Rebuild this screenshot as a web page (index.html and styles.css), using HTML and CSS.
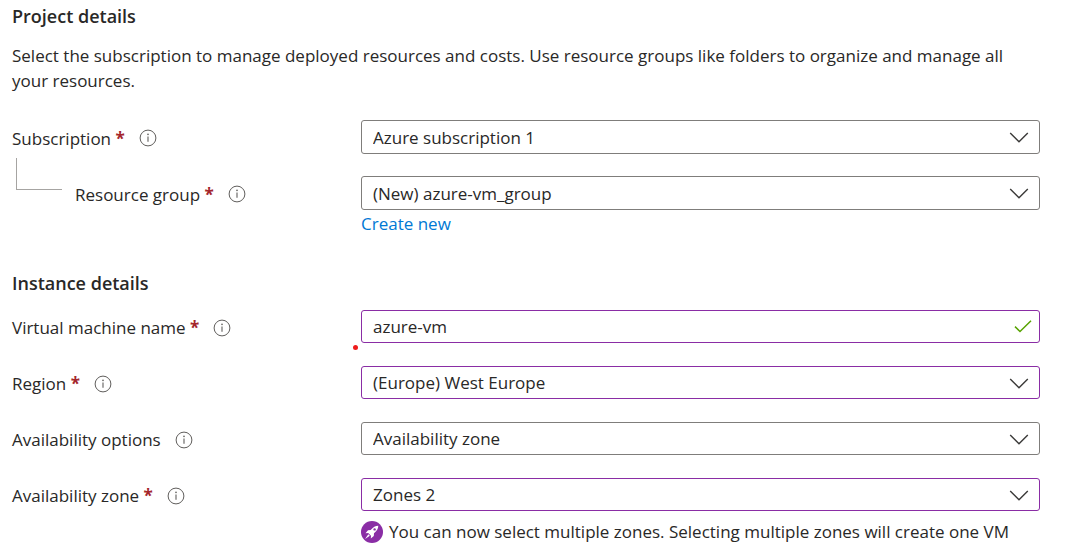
FILE: index.html
```html
<!DOCTYPE html>
<html lang="en">
<head>
<meta charset="utf-8">
<meta name="viewport" content="width=device-width, initial-scale=1">
<title>Create a virtual machine</title>
<link rel="stylesheet" href="styles.css">
</head>
<body>
<svg class="symbols" aria-hidden="true">
  <symbol id="info" viewBox="0 0 18 18"><circle cx="9" cy="9" r="7.9" fill="none" stroke="currentColor" stroke-width="1"/><path d="M9 7.400v5.400" stroke="currentColor" stroke-width="1.1"/><circle cx="9" cy="5.400" r=".8" fill="currentColor"/></symbol>
  <symbol id="chevron" viewBox="0 0 20 12"><path d="M1.200 1.900 10 10.700l8.800-8.800" fill="none" stroke="currentColor" stroke-width="1.400"/></symbol>
</svg>
<main class="form">
  <section class="section">
    <h2 class="heading">Project details</h2>
    <p class="intro">Select the subscription to manage deployed resources and costs. Use resource groups like folders to organize and manage all your resources.</p>
    <div class="fields">
      <div class="row">
        <div class="caption"><label for="subscription">Subscription <span class="required">*</span></label><svg class="info"><use href="#info"/></svg></div>
        <div class="picker"><select id="subscription" class="control"><option>Azure subscription 1</option></select><svg class="chevron"><use href="#chevron"/></svg></div>
      </div>
      <div class="row">
        <div class="caption"><span class="branch"></span><label for="group">Resource group <span class="required">*</span></label><svg class="info"><use href="#info"/></svg></div>
        <div>
          <div class="picker"><select id="group" class="control"><option>(New) azure-vm_group</option></select><svg class="chevron"><use href="#chevron"/></svg></div>
          <a class="link" href="#">Create new</a>
        </div>
      </div>
    </div>
  </section>
  <section class="section">
    <h2 class="heading">Instance details</h2>
    <div class="fields compact">
      <div class="row">
        <div class="caption"><label for="vm-name">Virtual machine name <span class="required">*</span></label><svg class="info"><use href="#info"/></svg></div>
        <div class="picker"><input id="vm-name" class="control edited" type="text" value="azure-vm"><svg class="check" viewBox="0 0 18 14"><path d="M1 6.600 6 11.500 17 .7" fill="none" stroke="currentColor" stroke-width="1.500"/></svg><span class="marker"></span></div>
      </div>
      <div class="row">
        <div class="caption"><label for="region">Region <span class="required">*</span></label><svg class="info"><use href="#info"/></svg></div>
        <div class="picker"><select id="region" class="control edited"><option>(Europe) West Europe</option></select><svg class="chevron"><use href="#chevron"/></svg></div>
      </div>
      <div class="row">
        <div class="caption"><label for="options">Availability options</label><svg class="info"><use href="#info"/></svg></div>
        <div class="picker"><select id="options" class="control"><option>Availability zone</option></select><svg class="chevron"><use href="#chevron"/></svg></div>
      </div>
      <div class="row">
        <div class="caption"><label for="zone">Availability zone <span class="required">*</span></label><svg class="info"><use href="#info"/></svg></div>
        <div>
          <div class="picker"><select id="zone" class="control edited"><option>Zones 2</option></select><svg class="chevron"><use href="#chevron"/></svg></div>
          <p class="hint"><svg class="rocket" viewBox="0 0 22 22"><circle cx="11" cy="11" r="11" fill="#8a2da5"/><path d="M17.300 4.700c-2.900 0-5.300 1.500-7.600 4.300L7 9.200l-2.500 3 2.700-.2 2.800 2.800-.2 2.700 3-2.500.2-2.700c2.800-2.300 4.300-4.700 4.300-7.600z" fill="#fff"/><circle cx="13.600" cy="8.400" r="1.200" fill="#8a2da5"/><path d="m7.300 13.200-3.200 4.700 4.700-3.200z" fill="#fff"/></svg><span>You can now select multiple zones. Selecting multiple zones will create one VM</span></p>
        </div>
      </div>
    </div>
  </section>
</main>
</body>
</html>
```
FILE: styles.css
```css
* { box-sizing: border-box; }

body {
  margin: 0;
  background: #fff;
  color: #292827;
  font: 17px/25px "Open Sans", "Noto Sans", sans-serif;
}

.symbols { position: absolute; width: 0; height: 0; }

.form {
  display: flex;
  flex-direction: column;
  gap: 35px;
  padding: 4px 32px 0 12px;
}

.heading { margin: 0; font-size: 18px; line-height: 25px; font-weight: 600; }
.intro { margin: 14px 0 13px; }

.fields { display: grid; gap: 22px; padding-top: 14px; }
.row { display: grid; grid-template-columns: 349px minmax(0, 1fr); align-items: start; }
.caption { display: flex; align-items: center; height: 36px; margin-bottom: -2px; white-space: nowrap; }
.required { color: #a4262c; font-weight: 700; }
.info { width: 18px; height: 18px; margin-left: 14px; color: #605e5c; }

.branch {
  align-self: flex-start;
  width: 46px;
  height: 32px;
  margin: -18px 13px 0 4px;
  border: solid #a6a4a2;
  border-width: 0 0 1px 1px;
}

.picker { position: relative; display: grid; align-items: center; }
.control {
  width: 100%;
  height: 34px;
  padding: 0 44px 0 11px;
  appearance: none;
  border: 1px solid #7f7d7b;
  border-radius: 3px;
  outline: 0;
  background: #fff;
  color: inherit;
  font: inherit;
}
.edited { border-color: #8a2da5; }

.compact { gap: 23px; }
.compact .caption { height: 35px; }
.compact .control { height: 33px; }

.chevron, .check { position: absolute; pointer-events: none; }
.chevron { right: 11px; width: 20px; height: 12px; color: #3b3a39; }
.check { right: 8px; width: 18px; height: 14px; color: #57a300; }

.marker {
  position: absolute;
  top: 35px;
  left: -8px;
  width: 5px;
  height: 5px;
  border-radius: 50%;
  background: #ee1c1c;
}

.link { display: block; width: fit-content; margin-top: 1px; color: #0078d4; text-decoration: none; }

.hint { display: flex; align-items: center; gap: 6px; margin: 8px 0 0; }
.rocket { flex: none; width: 22px; height: 22px; }
```
